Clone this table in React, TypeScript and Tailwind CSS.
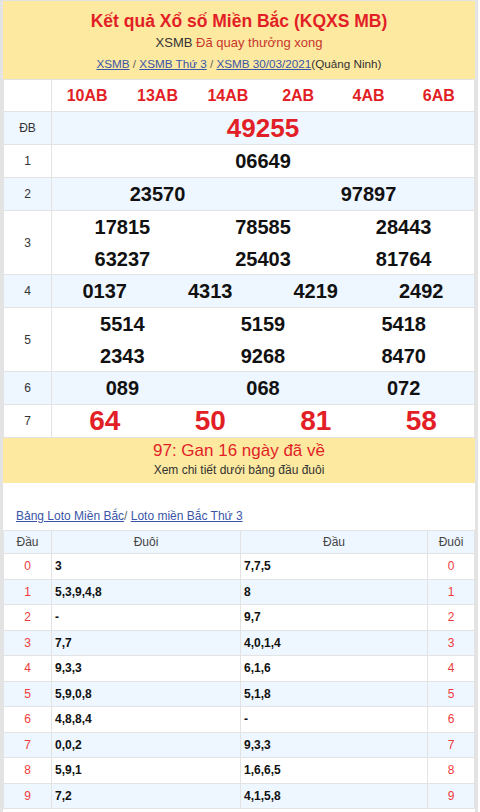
const prizes: { label: string; lines: string[][]; red?: boolean; big?: boolean }[] = [
  { label: 'ĐB', lines: [['49255']], red: true },
  { label: '1', lines: [['06649']] },
  { label: '2', lines: [['23570', '97897']] },
  { label: '3', lines: [['17815', '78585', '28443'], ['63237', '25403', '81764']] },
  { label: '4', lines: [['0137', '4313', '4219', '2492']] },
  { label: '5', lines: [['5514', '5159', '5418'], ['2343', '9268', '8470']] },
  { label: '6', lines: [['089', '068', '072']] },
  { label: '7', lines: [['64', '50', '81', '58']], red: true, big: true },
];

const codes = ['10AB', '13AB', '14AB', '2AB', '4AB', '6AB'];

const loto = [
  ['3', '7,7,5'],
  ['5,3,9,4,8', '8'],
  ['-', '9,7'],
  ['7,7', '4,0,1,4'],
  ['9,3,3', '6,1,6'],
  ['5,9,0,8', '5,1,8'],
  ['4,8,8,4', '-'],
  ['0,0,2', '9,3,3'],
  ['5,9,1', '1,6,6,5'],
  ['7,2', '4,1,5,8'],
];

export default function App() {
  return (
    <div className="w-[480px] h-[812px] overflow-hidden bg-white font-['Liberation_Sans',Arial,sans-serif] text-[#333]">
      <div className="w-[478px] border-x-[3px] border-t border-[#e3e3e3] min-h-[812px]">
        {/* Header */}
        <div className="bg-[#fde9a0] h-[78px] flex flex-col items-center pt-[7px]">
          <h1 className="text-[17.5px] leading-[26px] font-bold text-[#e21f26]">Kết quả Xổ số Miền Bắc (KQXS MB)</h1>
          <p className="text-[13px] leading-[16px] mt-[1px]">
            XSMB <span className="text-[#c8362d]">Đã quay thưởng xong</span>
          </p>
          <p className="text-[11.7px] leading-[16px] mt-[5px]">
            <a href="#" className="text-[#3a55a8] underline">XSMB</a>
            <span className="text-[#666]"> / </span>
            <a href="#" className="text-[#3a55a8] underline">XSMB Thứ 3</a>
            <span className="text-[#666]"> / </span>
            <a href="#" className="text-[#3a55a8] underline"> XSMB 30/03/2021</a>
            <span>(Quảng Ninh)</span>
          </p>
        </div>

        {/* Prize table */}
        <table className="w-full table-fixed border-collapse border border-[#e3e3e3]">
          <colgroup>
            <col className="w-[48px]" />
            <col />
          </colgroup>
          <tbody>
            <tr className="h-[32px] bg-white">
              <td className="border border-[#e3e3e3]"></td>
              <td className="border border-[#e3e3e3]">
                <div className="grid grid-cols-6 text-center text-[16px] font-bold text-[#e21f26]">
                  {codes.map((c) => (
                    <span key={c}>{c}</span>
                  ))}
                </div>
              </td>
            </tr>
            {prizes.map((p, i) => (
              <tr key={p.label} className={i % 2 === 0 ? 'bg-[#eef6ff]' : 'bg-white'}>
                <td className="border border-[#e3e3e3] text-center text-[12px] text-[#333]">{p.label}</td>
                <td className="border border-[#e3e3e3]">
                  {p.lines.map((line, j) => (
                    <div
                      key={j}
                      className={
                        'grid text-center font-bold items-center ' +
                        (p.lines.length > 1 ? 'h-[31.5px] ' : 'h-[32px] ') +
                        (line.length === 1
                          ? 'grid-cols-1 '
                          : line.length === 2
                            ? 'grid-cols-2 '
                            : line.length === 3
                              ? 'grid-cols-3 '
                              : 'grid-cols-4 ') +
                        (p.big
                          ? 'text-[28px] leading-[32px] text-[#e21f26]'
                          : p.red
                            ? 'text-[26px] leading-[32px] text-[#e21f26]'
                            : 'text-[20px] leading-[32px] text-[#111]')
                      }
                    >
                      {line.map((n) => (
                        <span key={n}>{n}</span>
                      ))}
                    </div>
                  ))}
                </td>
              </tr>
            ))}
          </tbody>
        </table>

        {/* Gan note */}
        <div className="bg-[#fde9a0] h-[45px] flex flex-col items-center pt-[2px]">
          <p className="text-[17px] leading-[22px] text-[#e21f26]">97: Gan 16 ngày đã về</p>
          <p className="text-[12px] leading-[16px] text-[#333]">Xem chi tiết dưới bảng đầu đuôi</p>
        </div>

        {/* Loto links */}
        <div className="pt-[25px] pb-[6px] pl-[13px] text-[12px] leading-[16px]">
          <a href="#" className="text-[#3a55a8] underline">Bảng Loto Miền Bắc</a>
          <span className="text-[#666]">/ </span>
          <a href="#" className="text-[#3a55a8] underline">Loto miền Bắc Thứ 3</a>
        </div>

        {/* Loto table */}
        <table className="w-full table-fixed border-collapse border border-[#e3e3e3] text-[12px]">
          <colgroup>
            <col className="w-[48px]" />
            <col className="w-[189px]" />
            <col className="w-[187px]" />
            <col />
          </colgroup>
          <thead>
            <tr className="h-[23px] bg-[#eef6ff] text-[#444]">
              <th className="border border-[#e3e3e3] font-normal">Đầu</th>
              <th className="border border-[#e3e3e3] font-normal">Đuôi</th>
              <th className="border border-[#e3e3e3] font-normal">Đầu</th>
              <th className="border border-[#e3e3e3] font-normal">Đuôi</th>
            </tr>
          </thead>
          <tbody>
            {loto.map((r, i) => (
              <tr key={i} className={'h-[25.5px] ' + (i % 2 === 1 ? 'bg-[#eef6ff]' : 'bg-white')}>
                <td className="border border-[#e3e3e3] text-center text-[#ef3b3b]">{i}</td>
                <td className="border border-[#e3e3e3] pl-[3px] font-bold text-[#111]">{r[0]}</td>
                <td className="border border-[#e3e3e3] pl-[3px] font-bold text-[#111]">{r[1]}</td>
                <td className="border border-[#e3e3e3] text-center text-[#ef3b3b]">{i}</td>
              </tr>
            ))}
          </tbody>
        </table>
      </div>
    </div>
  );
}
